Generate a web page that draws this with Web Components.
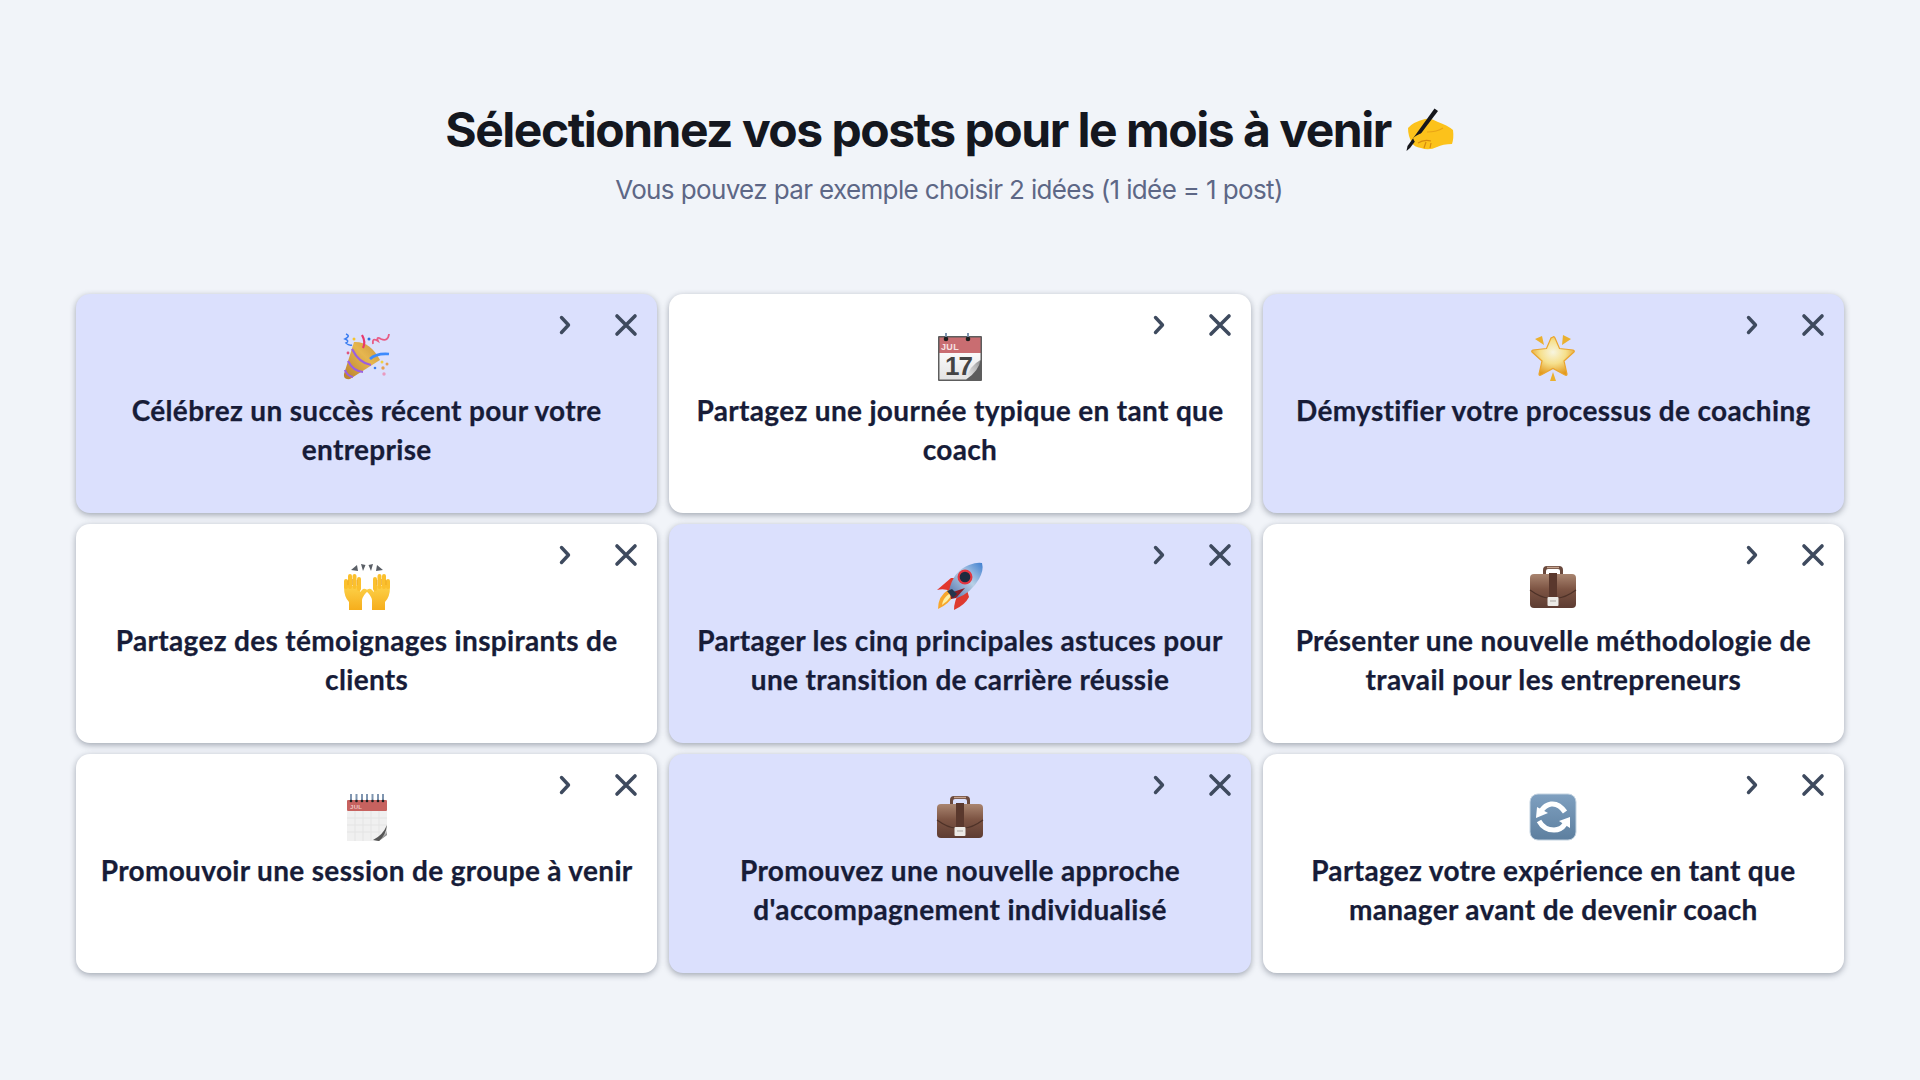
<!DOCTYPE html>
<html lang="fr">
<head>
<meta charset="utf-8">
<title>Sélectionnez vos posts</title>
<style>
    html, body { margin: 0; height: 100%; }
    body { background: #f1f4f9; font-family: "Lato", "Noto Sans", sans-serif; }
</style>
</head>
<body>
<post-picker>
    <post-header slot="header" subtitle="Vous pouvez par exemple choisir 2 idées (1 idée = 1 post)">Sélectionnez vos posts pour le mois à venir</post-header>
    <post-card icon="party" selected>Célébrez un succès récent pour votre entreprise</post-card>
    <post-card icon="calendar">Partagez une journée typique en tant que coach</post-card>
    <post-card icon="star" selected>Démystifier votre processus de coaching</post-card>
    <post-card icon="hands">Partagez des témoignages inspirants de clients</post-card>
    <post-card icon="rocket" selected>Partager les cinq principales astuces pour une transition de carrière réussie</post-card>
    <post-card icon="briefcase">Présenter une nouvelle méthodologie de travail pour les entrepreneurs</post-card>
    <post-card icon="spiral">Promouvoir une session de groupe à venir</post-card>
    <post-card icon="briefcase" selected>Promouvez une nouvelle approche d'accompagnement individualisé</post-card>
    <post-card icon="arrows">Partagez votre expérience en tant que manager avant de devenir coach</post-card>
</post-picker>

<script>
const emojis = {
    writing: `
        <path d="M3 22 Q8 16 20 13 Q26 12 33 16 Q42 19 48 24 Q49 32 47 38 Q38 38 32 41 Q24 45 16 42 Q9 41 7 37 Q3 30 3 22Z" fill="#fcc21b"/>
        <path d="M29.500 2.500 L33 5 L5 42 L1.500 45 L2.500 40Z" fill="#16161c"/>
        <path d="M8 32 Q14 27 22 26 Q17 30 13 36 Q10 38 8 32Z" fill="#fcc21b"/>
        <path d="M13 37 Q19 33 26 35 M19 42 L21 36 M25 42 L26 37" stroke="#d58a10" stroke-width="1.200" fill="none"/>
        <path d="M22 26 Q32 26 38 22" stroke="#e9a416" stroke-width="1.200" fill="none"/>`,
    party: `
        <defs><linearGradient id="g1" x1="0" y1="1" x2="1" y2="0"><stop offset="0" stop-color="#b8802a"/><stop offset=".6" stop-color="#e6b64f"/><stop offset="1" stop-color="#c9933a"/></linearGradient></defs>
        <path d="M1 41 L11 9 Q27 8 37 27 L7 46 Q0 47 1 41Z" fill="url(#g1)"/>
        <path d="M9 16 Q16 30 28 32 M5 28 Q10 38 20 39 M2 37 Q4 43 10 44" stroke="#9b5fe0" stroke-width="2.200" fill="none"/>
        <path d="M27 26 Q33 20 46 21" stroke="#3d8bfd" stroke-width="2.600" fill="none"/>
        <path d="M20 15 Q23 9 19 2" stroke="#e8386d" stroke-width="2.200" fill="none"/>
        <path d="M3 1 Q8 3 2 6 Q7 8 3 10 Q6 13 9 12" stroke="#3b7df0" stroke-width="1.500" fill="none"/>
        <path d="M30 11 Q29 4 35 8 Q33 3 38 6 Q45 9 46 1" stroke="#e85c86" stroke-width="1.800" fill="none"/>
        <circle cx="11" cy="6" r="1.500" fill="#f4c430"/><circle cx="26" cy="6" r="1.500" fill="#2b6de0"/>
        <circle cx="5" cy="20" r="1.400" fill="#e0557d"/><circle cx="39" cy="29" r="1.500" fill="#f0d040"/>
        <circle cx="44" cy="31" r="1.500" fill="#e7a052"/><circle cx="40" cy="35" r="1.700" fill="#e7a052"/>
        <circle cx="32" cy="35" r="1.300" fill="#3b7df0"/><circle cx="41" cy="41" r="1.700" fill="#e99ac0"/>`,
    calendar: `
        <defs>
            <linearGradient id="g2" x1="0" y1="0" x2="0" y2="1"><stop offset="0" stop-color="#fafafa"/><stop offset="1" stop-color="#e3e3e3"/></linearGradient>
            <linearGradient id="c2" x1="0" y1="1" x2="1" y2="0"><stop offset="0" stop-color="#f4f4f4"/><stop offset=".7" stop-color="#b5b5b5"/><stop offset="1" stop-color="#8a8a8a"/></linearGradient>
        </defs>
        <rect x="2" y="3" width="44" height="45" rx="1" fill="#5d5d5d"/>
        <rect x="3.500" y="4.500" width="41" height="15.500" fill="#c96d71"/>
        <path d="M3.500 20 H44.500 V27 L30 46.500 H3.500Z" fill="url(#g2)"/>
        <path d="M30 46.500 Q33 33 44.500 27 Q43 38 30 46.500Z" fill="url(#c2)"/>
        <rect x="9" y="0" width="2" height="6" fill="#7f95b0"/><rect x="31" y="0" width="2" height="6" fill="#7f95b0"/>
        <circle cx="10" cy="6" r="2.300" fill="#1d1d1d"/><circle cx="32" cy="6" r="2.300" fill="#1d1d1d"/>
        <text x="5" y="16.500" font-family="Liberation Sans" font-size="9" fill="#f6e2e2">JUL</text>
        <text x="9" y="42" font-family="Liberation Sans" font-size="26" letter-spacing="-1" fill="#444">17</text>`,
    star: `
        <defs><radialGradient id="g3" cx=".5" cy=".4" r=".6"><stop offset="0" stop-color="#f7f5e0"/><stop offset=".5" stop-color="#f6e08c"/><stop offset="1" stop-color="#e39a1f"/></radialGradient></defs>
        <path d="M24 4 Q25 3 26 5 L30.500 15.500 L44 17 Q46 18 45 19 L35 28 L38 41 Q38 43 36 42 L24 35.500 L12 42 Q10 43 10 41 L13 28 L3 19 Q2 18 4 17 L17.500 15.500 L22 5Z" fill="url(#g3)" stroke="#eaa52e" stroke-width="1.200"/>
        <path d="M6 6 L13 3 L15 12Z M42 6 L34 2 L33 12Z M24 39 L27 48 H21Z" fill="#eab02f"/>`,
    hands: `
        <defs><linearGradient id="g8" x1="0" y1="0" x2="0" y2="1"><stop offset="0" stop-color="#fdd24a"/><stop offset="1" stop-color="#f6ae1c"/></linearGradient></defs>
        <g>
            <path d="M1 24 Q1 34 6 39 L6 47 L19 47 L19 37 Q20 32 25 28 Q23 25 20 26 L17 29 L17 22Z" fill="url(#g8)"/>
            <path d="M3 24 V18 M7 24 V13 M11.500 24 V13 M16 26 V16" stroke="#fbc02d" stroke-width="4" stroke-linecap="round"/>
            <path d="M5 22 V17 M9.500 22 V16 M14 22 V17" stroke="#e69c18" stroke-width=".6"/>
        </g>
        <g transform="translate(48 0) scale(-1 1)">
            <path d="M1 24 Q1 34 6 39 L6 47 L19 47 L19 37 Q20 32 25 28 Q23 25 20 26 L17 29 L17 22Z" fill="url(#g8)"/>
            <path d="M3 24 V18 M7 24 V13 M11.500 24 V13 M16 26 V16" stroke="#fbc02d" stroke-width="4" stroke-linecap="round"/>
            <path d="M5 22 V17 M9.500 22 V16 M14 22 V17" stroke="#e69c18" stroke-width=".6"/>
        </g>
        <path d="M8 7 L14 2 L15 8Z M18 1 L22.500 2 L20 8Z M30 1 L25.500 2 L28 8Z M40 7 L34 2 L33 8Z" fill="#5a5f66"/>`,
    rocket: `
        <defs><linearGradient id="g4" x1="0" y1="1" x2="1" y2="0"><stop offset="0" stop-color="#4b6da8"/><stop offset=".55" stop-color="#b9d0e6"/><stop offset="1" stop-color="#3f7fd0"/></linearGradient></defs>
        <path d="M1 27 L15 15 L22 15 L14 28 Q8 25 1 27Z" fill="#e2382d"/>
        <path d="M18 47 Q18 38 23 30 L31 27 L33 34 Q29 42 18 47Z" fill="#de3a30"/>
        <path d="M2 46 Q2 33 12 27 L18 32 Q13 41 2 46Z" fill="#f7a62c"/>
        <path d="M6 42 Q7 35 13 31 L15 33 Q12 38 6 42Z" fill="#fdf0a4"/>
        <path d="M13 28 Q17 8 33 2 Q41 -1 46 0 Q48 7 43 16 Q35 30 21 35Z" fill="url(#g4)"/>
        <circle cx="29" cy="14" r="7.500" fill="#e33640"/><circle cx="29" cy="14" r="5.300" fill="#1e2b3f"/>
        <path d="M14 30 L29 25 L20 35 L15 36Z" fill="#8d1e26"/>
        <path d="M11 28 L16 26 L21 31 L17 35Z" fill="#25364d"/>`,
    briefcase: `
        <defs><linearGradient id="g5" x1="0" y1="0" x2="0" y2="1"><stop offset="0" stop-color="#a98570"/><stop offset=".45" stop-color="#7d5443"/><stop offset="1" stop-color="#5d3c32"/></linearGradient></defs>
        <path d="M14 12 V7 Q14 3 18 3 H30 Q34 3 34 7 V12 H31 V8 Q31 6 29 6 H19 Q17 6 17 8 V12Z" fill="#6b4a3e"/>
        <path d="M18 4.500 H30" stroke="#c7a48e" stroke-width="1.500"/>
        <rect x="1" y="11" width="46" height="34" rx="4" fill="url(#g5)"/>
        <path d="M1 27 Q12 35 20 35 H28 Q36 35 47 27" stroke="#4e3228" stroke-width="1.200" fill="none"/>
        <rect x="20" y="10" width="8" height="24" fill="#5a382d"/>
        <rect x="18.500" y="34" width="11" height="9" rx="1" fill="#eceae6"/>
        <path d="M21 38 H27" stroke="#a9a5a0" stroke-width="1"/>`,
    spiral: `
        <defs><linearGradient id="g6" x1="0" y1="0" x2="1" y2="1"><stop offset=".65" stop-color="#efefef"/><stop offset=".9" stop-color="#3f3f3f"/><stop offset="1" stop-color="#bbb"/></linearGradient></defs>
        <path d="M4 18 H44 V38 L34 48 H4Z" fill="#f0f0f0"/>
        <path d="M12 18 V48 M20 18 V48 M28 18 V48 M36 18 V42 M4 25 H44 M4 32 H44 M4 39 H38" stroke="#e4e4e4" stroke-width="1"/>
        <path d="M26 48 Q36 46 44 32 V42 L36 48Z" fill="url(#g6)"/>
        <path d="M30 47 Q40 42 44 32 Q43 42 36 48Z" fill="#565656"/>
        <rect x="4" y="7" width="40" height="11" rx="1" fill="#c7625f"/>
        <text x="7" y="16" font-family="Liberation Sans" font-size="6" fill="#eec6c4">JUL</text>
        <g fill="#7f95b0"><rect x="7" y="1" width="2" height="6"/><rect x="12.500" y="1" width="2" height="6"/><rect x="18" y="1" width="2" height="6"/><rect x="23" y="1" width="2" height="6"/><rect x="28.500" y="1" width="2" height="6"/><rect x="34" y="1" width="2" height="6"/><rect x="39" y="1" width="2" height="6"/></g>
        <g fill="#1f1f1f"><circle cx="8" cy="8" r="1.300"/><circle cx="13.500" cy="8" r="1.300"/><circle cx="19" cy="8" r="1.300"/><circle cx="24" cy="8" r="1.300"/><circle cx="29.500" cy="8" r="1.300"/><circle cx="35" cy="8" r="1.300"/><circle cx="40" cy="8" r="1.300"/></g>`,
    arrows: `
        <defs><linearGradient id="g7" x1="0" y1="0" x2="0" y2="1"><stop offset="0" stop-color="#7fa0c0"/><stop offset="1" stop-color="#5d7f9f"/></linearGradient></defs>
        <rect x="1" y="1" width="46" height="46" rx="8" fill="url(#g7)" stroke="#c2d2e0"/>
        <path d="M36 19 Q30 10 22 11 Q16 12 12 18" stroke="#fff" stroke-width="5" fill="none"/>
        <path d="M8 14 L7 25 L19 20Z" fill="#fff"/>
        <path d="M10 28 Q15 37 25 37 Q32 37 36 31" stroke="#fff" stroke-width="5" fill="none"/>
        <path d="M41 24 L41 35 L30 28Z" fill="#fff"/>`
};

class EmojiIcon extends HTMLElement {
    constructor() {
        super();
        this.attachShadow({ mode: 'open' });
    }

    connectedCallback() {
        const size = this.getAttribute('size') || 48;
        this.shadowRoot.innerHTML = `
            <style>
                :host { display: inline-block; line-height: 0; }
                svg { display: block; overflow: visible; }
            </style>
            <svg width="${size}" height="${size}" viewBox="0 0 48 48" aria-hidden="true">${emojis[this.getAttribute('name')]}</svg>
        `;
    }
}

class PostHeader extends HTMLElement {
    constructor() {
        super();
        this.attachShadow({ mode: 'open' });
    }

    connectedCallback() {
        this.shadowRoot.innerHTML = `
            <style>
                :host {
                    display: block;
                    text-align: center;
                    padding-right: 22px;
                }
                h1 {
                    margin: 0;
                    font: 700 48px/60px "Inter", sans-serif;
                    letter-spacing: -1.5px;
                    color: #14171f;
                    display: flex;
                    justify-content: center;
                    align-items: center;
                    gap: 14px;
                }
                p {
                    margin: 12px 0 0;
                    font: 400 26px/36px "Inter", sans-serif;
                    letter-spacing: -0.63px;
                    color: #5d6786;
                }
            </style>
            <h1><span><slot></slot></span><emoji-icon name="writing" size="48"></emoji-icon></h1>
            <p>${this.getAttribute('subtitle')}</p>
        `;
    }
}

class PostCard extends HTMLElement {
    constructor() {
        super();
        this.attachShadow({ mode: 'open' });
    }

    connectedCallback() {
        this.shadowRoot.innerHTML = `
            <style>
                :host {
                    display: flex;
                    flex-direction: column;
                    align-items: center;
                    position: relative;
                    box-sizing: border-box;
                    height: 219px;
                    padding: 39px 20px 0;
                    background: #ffffff;
                    border-radius: 14px;
                    box-shadow: 0 2px 6px rgba(40, 50, 70, 0.4);
                    text-align: center;
                    color: #171c38;
                    font: 700 28px/39px "Lato", sans-serif;
                    letter-spacing: 0.33px;
                    -webkit-text-stroke: 0.25px #171c38;
                }
                :host([selected]) {
                    background: #dbe0fd;
                }
                .actions {
                    position: absolute;
                    top: 18px;
                    right: 18px;
                    display: flex;
                    align-items: center;
                    gap: 36px;
                    color: #3e4a5e;
                }
                svg { display: block; }
                .label { margin-top: 10px; }
            </style>
            <div class="actions">
                <svg width="24" height="24" viewBox="0 0 24 24" fill="none" stroke="currentColor" stroke-width="3.400" stroke-linecap="round" stroke-linejoin="round"><path d="M8.500 4.500 L15.500 12 L8.500 19.500"/></svg>
                <svg width="26" height="26" viewBox="0 0 26 26" fill="none" stroke="currentColor" stroke-width="3.600" stroke-linecap="round"><path d="M4 4 L22 22 M22 4 L4 22"/></svg>
            </div>
            <emoji-icon name="${this.getAttribute('icon')}"></emoji-icon>
            <div class="label"><slot></slot></div>
        `;
    }
}

class PostPicker extends HTMLElement {
    constructor() {
        super();
        this.attachShadow({ mode: 'open' });
    }

    connectedCallback() {
        this.shadowRoot.innerHTML = `
            <style>
                :host {
                    display: block;
                    box-sizing: border-box;
                    height: 1080px;
                    padding: 100px 76px 0;
                }
                .grid {
                    display: grid;
                    grid-template-columns: repeat(3, 1fr);
                    gap: 11px 12px;
                    margin-top: 86px;
                }
            </style>
            <slot name="header"></slot>
            <div class="grid"><slot></slot></div>
        `;
    }
}

customElements.define('emoji-icon', EmojiIcon);
customElements.define('post-header', PostHeader);
customElements.define('post-card', PostCard);
customElements.define('post-picker', PostPicker);
</script>
</body>
</html>
